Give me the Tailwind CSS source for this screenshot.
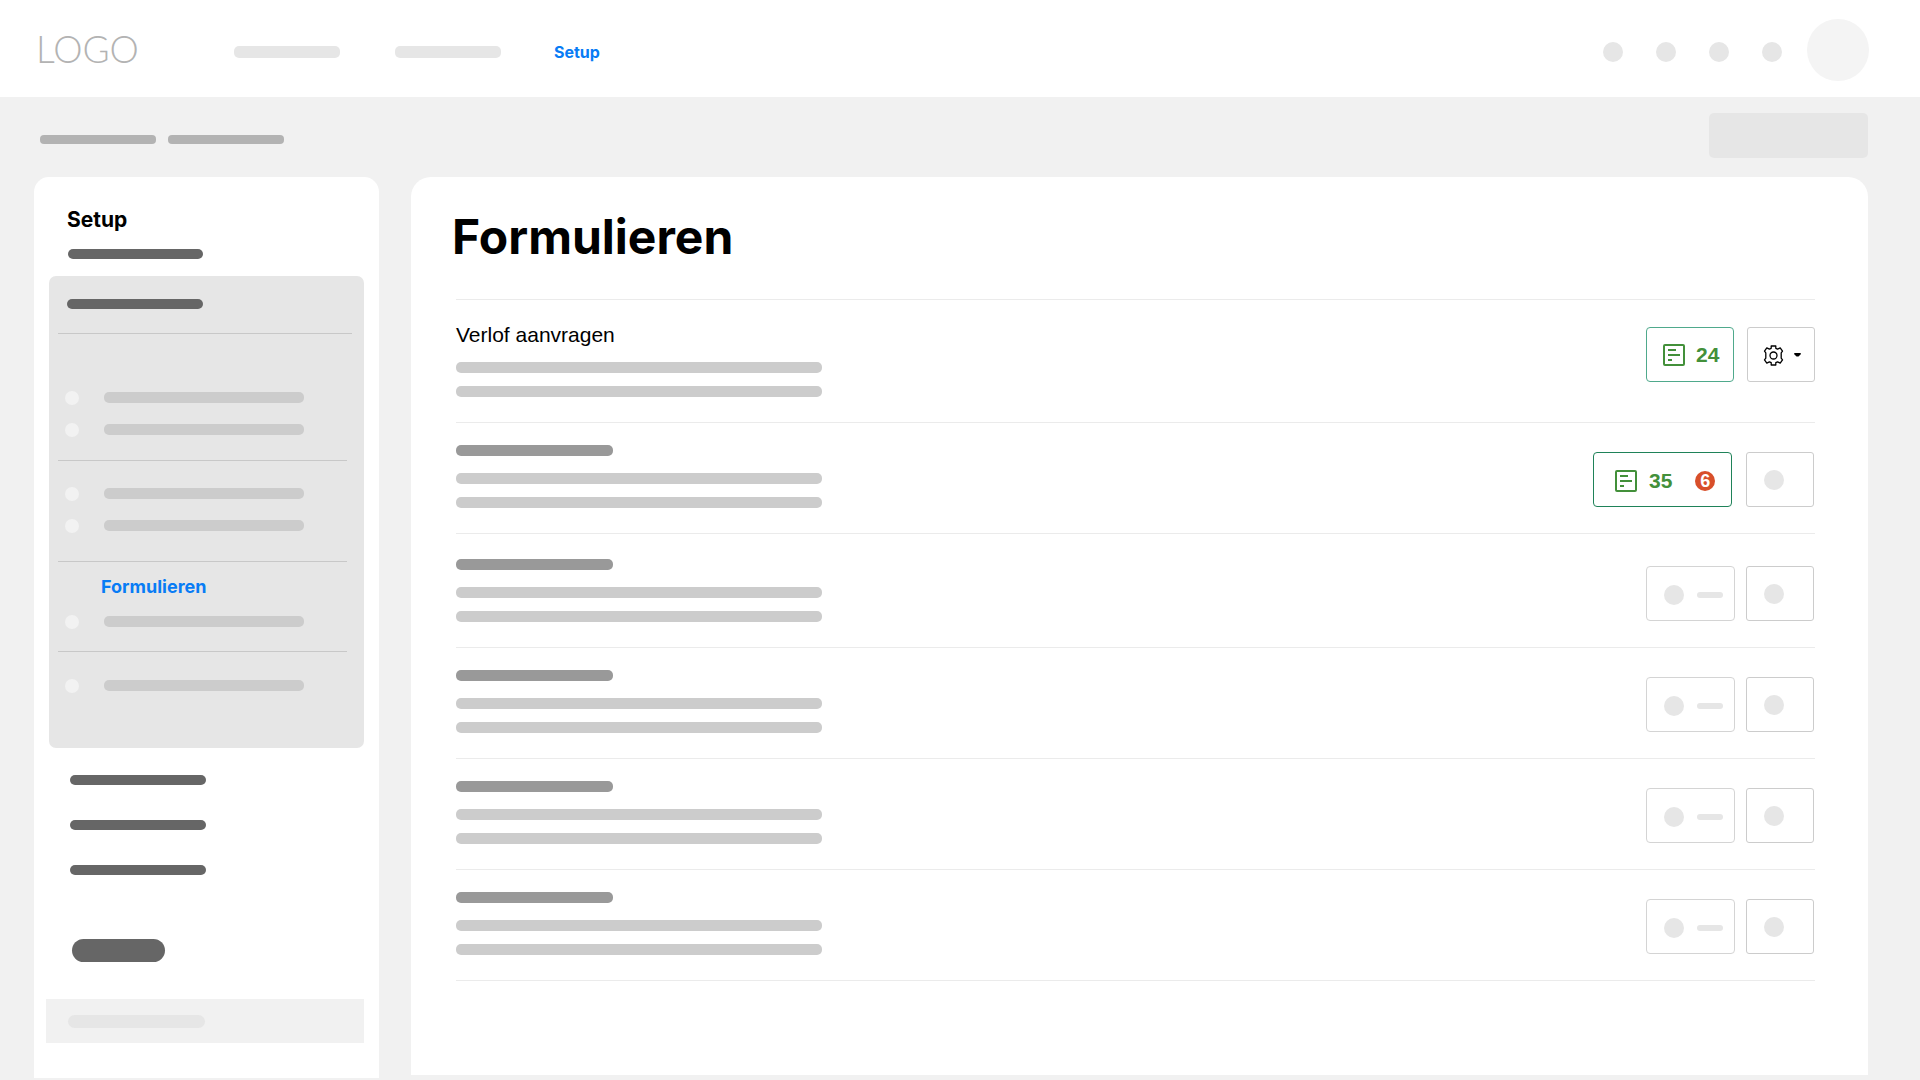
<!DOCTYPE html>
<html lang="nl">
<head>
    <meta charset="UTF-8">
    <meta name="viewport" content="width=device-width, initial-scale=1.0">
    <title>Formulieren</title>
    <script src="https://cdn.jsdelivr.net/npm/@tailwindcss/browser@4"></script>
</head>
<body class="min-h-screen bg-[#f1f1f1] font-['Inter',sans-serif] text-black">
    <!-- Top bar -->
    <header class="flex h-[97px] items-center bg-white pl-9 pr-[51px]">
        <a href="#" class="w-[198px] font-['Lato',sans-serif] text-[37px] leading-10 font-light text-[#b3b3b3]">LOGO</a>
        <nav class="flex items-center pt-[6px]">
            <div class="h-3 w-[106px] rounded-[5px] bg-[#e6e6e6]"></div>
            <div class="ml-[55px] h-3 w-[106px] rounded-[5px] bg-[#e6e6e6]"></div>
            <a href="#" class="ml-[53px] text-[16px] leading-5 font-bold text-[#087cf5]">Setup</a>
        </nav>
        <div class="ml-auto flex items-center">
            <div class="flex gap-[33px] pt-[6px] pr-[25px]">
                <div class="size-5 rounded-full bg-[#e6e6e6]"></div>
                <div class="size-5 rounded-full bg-[#e6e6e6]"></div>
                <div class="size-5 rounded-full bg-[#e6e6e6]"></div>
                <div class="size-5 rounded-full bg-[#e6e6e6]"></div>
            </div>
            <div class="mt-[3px] size-[62px] rounded-full bg-[#f4f4f4]"></div>
        </div>
    </header>

    <!-- Breadcrumb -->
    <div class="flex h-20 items-center justify-between pl-10 pr-[52px]">
        <div class="flex gap-3 pt-[5px]">
            <div class="h-[9px] w-[116px] rounded-[4px] bg-[#b3b3b3]"></div>
            <div class="h-[9px] w-[116px] rounded-[4px] bg-[#b3b3b3]"></div>
        </div>
        <div class="mb-[3px] h-[45px] w-[159px] rounded-[5px] bg-[#e6e6e6]"></div>
    </div>

    <div class="flex items-start gap-8 pl-[34px] pr-[52px]">
        <!-- Sidebar -->
        <aside class="w-[345px] shrink-0 rounded-t-[15px] bg-white pt-[29px] pr-[15px] pb-[35px] pl-[15px]">
            <h2 class="pl-[18px] text-[21px] leading-7 font-bold">Setup</h2>
            <div class="mt-[15px] ml-[19px] h-[10px] w-[135px] rounded-full bg-[#666]"></div>

            <div class="mt-[17px] rounded-[7px] bg-[#e6e6e6] pt-[23px] pr-[17px] pb-[57px] pl-[9px]">
                <div class="ml-[9px] h-[10px] w-[136px] rounded-full bg-[#666]"></div>
                <hr class="mt-6 -mr-[5px] border-[#c8c8c8]">
                <div class="flex flex-col gap-[21px] pt-[58px] pb-[25px] pl-[7px]">
                    <div class="flex items-center gap-[25px]">
                        <div class="-my-1 size-[14px] rounded-full bg-[#f2f2f2]"></div>
                        <div class="h-[11px] w-[200px] rounded-[5px] bg-[#ccc]"></div>
                    </div>
                    <div class="flex items-center gap-[25px]">
                        <div class="-my-1 size-[14px] rounded-full bg-[#f2f2f2]"></div>
                        <div class="h-[11px] w-[200px] rounded-[5px] bg-[#ccc]"></div>
                    </div>
                </div>
                <hr class="border-[#c8c8c8]">
                <div class="flex flex-col gap-[21px] pt-[27px] pb-[30px] pl-[7px]">
                    <div class="flex items-center gap-[25px]">
                        <div class="-my-1 size-[14px] rounded-full bg-[#f2f2f2]"></div>
                        <div class="h-[11px] w-[200px] rounded-[5px] bg-[#ccc]"></div>
                    </div>
                    <div class="flex items-center gap-[25px]">
                        <div class="-my-1 size-[14px] rounded-full bg-[#f2f2f2]"></div>
                        <div class="h-[11px] w-[200px] rounded-[5px] bg-[#ccc]"></div>
                    </div>
                </div>
                <hr class="border-[#c8c8c8]">
                <div class="pt-[13px] pb-6 pl-[7px]">
                    <a href="#" class="ml-9 block text-[18px] leading-6 font-bold text-[#087cf5]">Formulieren</a>
                    <div class="mt-[17px] flex items-center gap-[25px]">
                        <div class="-my-1 size-[14px] rounded-full bg-[#f2f2f2]"></div>
                        <div class="h-[11px] w-[200px] rounded-[5px] bg-[#ccc]"></div>
                    </div>
                </div>
                <hr class="border-[#c8c8c8]">
                <div class="flex items-center gap-[25px] pt-7 pl-[7px]">
                    <div class="-my-1 size-[14px] rounded-full bg-[#f2f2f2]"></div>
                    <div class="h-[11px] w-[200px] rounded-[5px] bg-[#ccc]"></div>
                </div>
            </div>

            <div class="mt-[27px] ml-[21px] flex flex-col gap-[35px]">
                <div class="h-[10px] w-[136px] rounded-full bg-[#666]"></div>
                <div class="h-[10px] w-[136px] rounded-full bg-[#666]"></div>
                <div class="h-[10px] w-[136px] rounded-full bg-[#666]"></div>
            </div>
            <div class="mt-16 ml-[23px] h-[23px] w-[93px] rounded-full bg-[#666]"></div>
            <div class="mt-[37px] -ml-[3px] bg-[#f1f1f1] pt-4 pb-[15px] pl-[22px]">
                <div class="h-[13px] w-[137px] rounded-full bg-[#e6e6e6]"></div>
            </div>
        </aside>

        <!-- Forms overview -->
        <main class="min-w-0 flex-1 rounded-t-[20px] bg-white pt-8 pr-[53px] pb-[94px] pl-[45px]">
            <h1 class="mb-[34px] -ml-1 text-[48px] leading-14 font-bold">Formulieren</h1>

            <ul class="border-t border-[#ebebeb]">
                <li class="flex items-start justify-between border-b border-[#ebebeb] pt-5 pb-[25px]">
                    <div>
                        <h3 class="mb-3 font-['Liberation_Sans',sans-serif] text-[21px] leading-[30px]">Verlof aanvragen</h3>
                        <div class="h-[11px] w-[366px] rounded-[5px] bg-[#ccc]"></div>
                        <div class="mt-[13px] h-[11px] w-[366px] rounded-[5px] bg-[#ccc]"></div>
                    </div>
                    <div class="mt-[7px] flex gap-[13px] font-['Liberation_Sans',sans-serif]">
                        <button class="flex h-[55px] w-[88px] items-center gap-[11px] rounded-[4px] border border-[#4fa98c] pt-px pl-4 text-[21px] font-bold text-[#43903a]">
                            <svg class="size-[22px]" viewBox="0 0 22 22" fill="none" stroke="currentColor" stroke-width="2">
                                <rect x="1" y="1" width="20" height="20" rx="1" />
                                <path d="M5 6h8M5 11h12M5 16h4" />
                            </svg>
                            24
                        </button>
                        <button aria-label="Instellingen" class="flex h-[55px] w-[68px] items-center gap-[10px] rounded-[3px] border border-[#ccc] pt-px pl-[15px]">
                            <svg class="size-[21px]" viewBox="0 0 21 21" fill="none" stroke="currentColor" stroke-width="1.3" stroke-linejoin="round">
                                <path d="M8.200 1h4.600v2.300l1.800.8 2.600-1.200 2.300 3.200-1.300 1.700v5.400l1.300 1.700-2.300 3.200-2.600-1.200-1.800.8V20H8.200v-2.300l-1.800-.8-2.600 1.200-2.300-3.200 1.300-1.700V7.800L1.500 6.100l2.300-3.200 2.600 1.200 1.800-.8z" />
                                <circle cx="10.500" cy="10.500" r="3.500" />
                            </svg>
                            <svg class="h-1 w-[7px]" viewBox="0 0 7 4" fill="currentColor">
                                <path d="M0.500 0h6L7 1 4.500 3.500h-2L0 1z" />
                            </svg>
                        </button>
                    </div>
                </li>

                <li class="flex items-start justify-between border-b border-[#ebebeb] pt-[22px] pb-[25px]">
                    <div>
                        <div class="h-[11px] w-[157px] rounded-[5px] bg-[#999]"></div>
                        <div class="mt-[17px] h-[11px] w-[366px] rounded-[5px] bg-[#ccc]"></div>
                        <div class="mt-[13px] h-[11px] w-[366px] rounded-[5px] bg-[#ccc]"></div>
                    </div>
                    <div class="mt-[7px] mr-px flex gap-[14px] font-['Liberation_Sans',sans-serif]">
                        <button class="flex h-[55px] w-[139px] items-center gap-3 rounded-[4px] border border-[#1f8259] pt-[3px] pl-[21px] text-[21px] font-bold text-[#43903a]">
                            <svg class="size-[22px]" viewBox="0 0 22 22" fill="none" stroke="currentColor" stroke-width="2">
                                <rect x="1" y="1" width="20" height="20" rx="1" />
                                <path d="M5 6h8M5 11h12M5 16h4" />
                            </svg>
                            35
                            <span class="ml-[11px] flex size-5 items-center justify-center rounded-full bg-[#d84f2a] text-[18px] leading-5 text-white">6</span>
                        </button>
                        <button aria-label="Instellingen" class="flex h-[55px] w-[68px] items-center rounded-[3px] border border-[#ccc] pl-[17px]">
                            <span class="size-5 rounded-full bg-[#e6e6e6]"></span>
                        </button>
                    </div>
                </li>

                <li class="flex items-start justify-between border-b border-[#ebebeb] pt-[25px] pb-[25px]">
                    <div>
                        <div class="h-[11px] w-[157px] rounded-[5px] bg-[#999]"></div>
                        <div class="mt-[17px] h-[11px] w-[366px] rounded-[5px] bg-[#ccc]"></div>
                        <div class="mt-[13px] h-[11px] w-[366px] rounded-[5px] bg-[#ccc]"></div>
                    </div>
                    <div class="mt-[7px] mr-px flex gap-[11px]">
                        <button aria-label="Inzendingen" class="flex h-[55px] w-[89px] items-center gap-[13px] rounded-[4px] border border-[#d4d4d4] pt-[2px] pl-[17px]">
                            <span class="size-5 rounded-full bg-[#e6e6e6]"></span>
                            <span class="h-[6px] w-[26px] rounded-full bg-[#e6e6e6]"></span>
                        </button>
                        <button aria-label="Instellingen" class="flex h-[55px] w-[68px] items-center rounded-[3px] border border-[#ccc] pl-[17px]">
                            <span class="size-5 rounded-full bg-[#e6e6e6]"></span>
                        </button>
                    </div>
                </li>

                <li class="flex items-start justify-between border-b border-[#ebebeb] pt-[22px] pb-[25px]">
                    <div>
                        <div class="h-[11px] w-[157px] rounded-[5px] bg-[#999]"></div>
                        <div class="mt-[17px] h-[11px] w-[366px] rounded-[5px] bg-[#ccc]"></div>
                        <div class="mt-[13px] h-[11px] w-[366px] rounded-[5px] bg-[#ccc]"></div>
                    </div>
                    <div class="mt-[7px] mr-px flex gap-[11px]">
                        <button aria-label="Inzendingen" class="flex h-[55px] w-[89px] items-center gap-[13px] rounded-[4px] border border-[#d4d4d4] pt-[2px] pl-[17px]">
                            <span class="size-5 rounded-full bg-[#e6e6e6]"></span>
                            <span class="h-[6px] w-[26px] rounded-full bg-[#e6e6e6]"></span>
                        </button>
                        <button aria-label="Instellingen" class="flex h-[55px] w-[68px] items-center rounded-[3px] border border-[#ccc] pl-[17px]">
                            <span class="size-5 rounded-full bg-[#e6e6e6]"></span>
                        </button>
                    </div>
                </li>

                <li class="flex items-start justify-between border-b border-[#ebebeb] pt-[22px] pb-[25px]">
                    <div>
                        <div class="h-[11px] w-[157px] rounded-[5px] bg-[#999]"></div>
                        <div class="mt-[17px] h-[11px] w-[366px] rounded-[5px] bg-[#ccc]"></div>
                        <div class="mt-[13px] h-[11px] w-[366px] rounded-[5px] bg-[#ccc]"></div>
                    </div>
                    <div class="mt-[7px] mr-px flex gap-[11px]">
                        <button aria-label="Inzendingen" class="flex h-[55px] w-[89px] items-center gap-[13px] rounded-[4px] border border-[#d4d4d4] pt-[2px] pl-[17px]">
                            <span class="size-5 rounded-full bg-[#e6e6e6]"></span>
                            <span class="h-[6px] w-[26px] rounded-full bg-[#e6e6e6]"></span>
                        </button>
                        <button aria-label="Instellingen" class="flex h-[55px] w-[68px] items-center rounded-[3px] border border-[#ccc] pl-[17px]">
                            <span class="size-5 rounded-full bg-[#e6e6e6]"></span>
                        </button>
                    </div>
                </li>

                <li class="flex items-start justify-between border-b border-[#ebebeb] pt-[22px] pb-[25px]">
                    <div>
                        <div class="h-[11px] w-[157px] rounded-[5px] bg-[#999]"></div>
                        <div class="mt-[17px] h-[11px] w-[366px] rounded-[5px] bg-[#ccc]"></div>
                        <div class="mt-[13px] h-[11px] w-[366px] rounded-[5px] bg-[#ccc]"></div>
                    </div>
                    <div class="mt-[7px] mr-px flex gap-[11px]">
                        <button aria-label="Inzendingen" class="flex h-[55px] w-[89px] items-center gap-[13px] rounded-[4px] border border-[#d4d4d4] pt-[2px] pl-[17px]">
                            <span class="size-5 rounded-full bg-[#e6e6e6]"></span>
                            <span class="h-[6px] w-[26px] rounded-full bg-[#e6e6e6]"></span>
                        </button>
                        <button aria-label="Instellingen" class="flex h-[55px] w-[68px] items-center rounded-[3px] border border-[#ccc] pl-[17px]">
                            <span class="size-5 rounded-full bg-[#e6e6e6]"></span>
                        </button>
                    </div>
                </li>
            </ul>
        </main>
    </div>
</body>
</html>
